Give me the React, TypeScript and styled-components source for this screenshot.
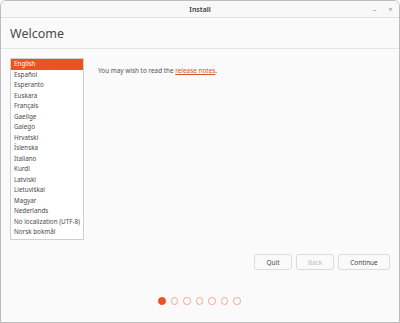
import styled, { createGlobalStyle } from "styled-components";

const languages = [
  "English",
  "Español",
  "Esperanto",
  "Euskara",
  "Français",
  "Gaeilge",
  "Galego",
  "Hrvatski",
  "Íslenska",
  "Italiano",
  "Kurdî",
  "Latviski",
  "Lietuviškai",
  "Magyar",
  "Nederlands",
  "No localization (UTF-8)",
  "Norsk bokmål",
];

const steps = 7;

const App = () => {
  return (
    <>
      <Global />
      <Window>
        <TitleBar>
          <Title>Install</Title>
          <Controls>
            <Control>–</Control>
            <Control>×</Control>
          </Controls>
        </TitleBar>
        <Header>
          <H1>Welcome</H1>
        </Header>
        <Body>
          <Main>
            <List>
              {languages.map((lang, i) => (
                <Item key={lang} selected={i === 0}>
                  {lang}
                </Item>
              ))}
            </List>
            <Notes>
              You may wish to read the <Link href="#">release notes</Link>.
            </Notes>
          </Main>
          <Buttons>
            <Button>Quit</Button>
            <Button disabled>Back</Button>
            <Button wide>Continue</Button>
          </Buttons>
          <Dots>
            {Array.from({ length: steps }).map((_, i) => (
              <Dot key={i} active={i === 0} />
            ))}
          </Dots>
        </Body>
      </Window>
    </>
  );
};

export default App;

const Global = createGlobalStyle`
  html, body {
    margin: 0;
    padding: 0;
    background: #ffffff;
  }
  body {
    font-family: "Noto Sans", "DejaVu Sans", sans-serif;
  }
`;

const Window = styled.div`
  box-sizing: border-box;
  width: 400px;
  height: 323px;
  display: flex;
  flex-direction: column;
  background: #fafafa;
  border: 1px solid #bdbdbd;
  border-radius: 6px 6px 0 0;
  overflow: hidden;
`;

const TitleBar = styled.div`
  position: relative;
  height: 16px;
  flex-shrink: 0;
  display: flex;
  align-items: center;
  justify-content: center;
  background: #f8f8f8;
  border-bottom: 1px solid #e2e2e2;
`;

const Title = styled.div`
  font-size: 7px;
  font-weight: 600;
  color: #3d3d3d;
`;

const Controls = styled.div`
  position: absolute;
  right: 5px;
  top: 0;
  height: 100%;
  display: flex;
  align-items: center;
  gap: 9px;
`;

const Control = styled.span`
  font-size: 7px;
  color: #888;
  width: 7px;
  text-align: center;
`;

const Header = styled.div`
  height: 30px;
  flex-shrink: 0;
  display: flex;
  align-items: center;
  padding-left: 9px;
  border-bottom: 1px solid #e4e4e4;
`;

const H1 = styled.h1`
  margin: 0;
  font-size: 12.5px;
  font-weight: normal;
  color: #4a4a4a;
`;

const Body = styled.div`
  flex: 1;
  display: flex;
  flex-direction: column;
  padding: 9px 9px 0 9px;
`;

const Main = styled.div`
  display: flex;
  gap: 14px;
`;

const List = styled.div`
  box-sizing: border-box;
  width: 74px;
  height: 182px;
  background: #ffffff;
  border: 1px solid #cfcfcf;
  display: flex;
  flex-direction: column;
`;

const Item = styled.div<{ selected?: boolean }>`
  height: 10.5px;
  line-height: 10.5px;
  padding-left: 3px;
  font-size: 6.3px;
  white-space: nowrap;
  color: ${(p) => (p.selected ? "#ffffff" : "#4a4a4a")};
  background: ${(p) => (p.selected ? "#e95420" : "transparent")};
`;

const Notes = styled.p`
  margin: 8px 0 0 0;
  font-size: 6.4px;
  color: #555;
`;

const Link = styled.a`
  color: #d4542a;
  text-decoration: underline;
`;

const Buttons = styled.div`
  display: flex;
  justify-content: flex-end;
  gap: 4px;
  margin-top: 14px;
`;

const Button = styled.button<{ wide?: boolean }>`
  box-sizing: border-box;
  width: ${(p) => (p.wide ? "52px" : "38px")};
  height: 16px;
  padding: 0;
  font-family: inherit;
  font-size: 6.4px;
  color: ${(p) => (p.disabled ? "#c0c0c0" : "#444")};
  background: #fafafa;
  border: 1px solid #dcdcdc;
  border-radius: 3px;
`;

const Dots = styled.div`
  display: flex;
  justify-content: center;
  gap: 5px;
  margin-top: 27px;
  padding-right: 1px;
`;

const Dot = styled.span<{ active?: boolean }>`
  box-sizing: border-box;
  width: 7.5px;
  height: 7.5px;
  border-radius: 50%;
  border: 1px solid ${(p) => (p.active ? "#e95420" : "#f0a890")};
  background: ${(p) => (p.active ? "#e95420" : "transparent")};
`;
